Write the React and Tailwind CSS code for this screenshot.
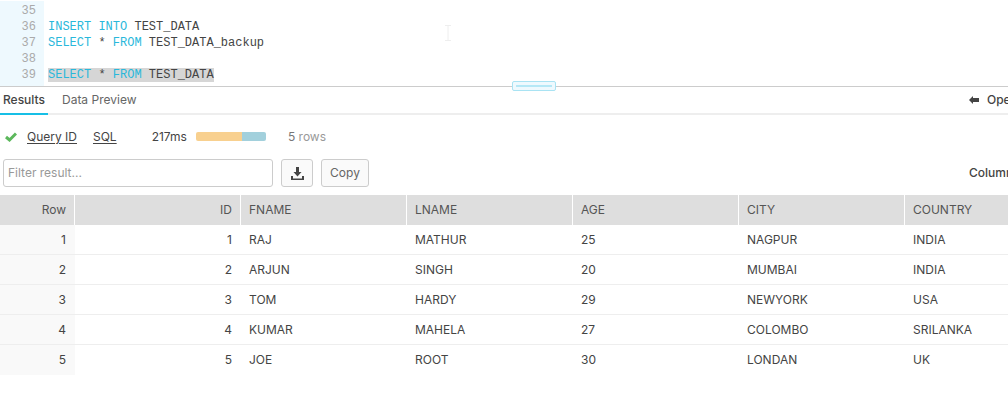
const rows = [
  [1, 1, "RAJ", "MATHUR", 25, "NAGPUR", "INDIA"],
  [2, 2, "ARJUN", "SINGH", 20, "MUMBAI", "INDIA"],
  [3, 3, "TOM", "HARDY", 29, "NEWYORK", "USA"],
  [4, 4, "KUMAR", "MAHELA", 27, "COLOMBO", "SRILANKA"],
  [5, 5, "JOE", "ROOT", 30, "LONDAN", "UK"],
];

const headers = ["FNAME", "LNAME", "AGE", "CITY", "COUNTRY"];

function CodeLine({ num, children }) {
  return (
    <div className="flex h-4 leading-4">
      <div className="w-[44px] shrink-0 bg-[#eef9fe] pr-[8px] text-right text-[#aaaaaa]">{num}</div>
      <div className="pl-[4px] whitespace-pre text-[#444444]">{children}</div>
    </div>
  );
}

function Kw({ children }) {
  return <span className="text-[#29b8db]">{children}</span>;
}

function TableGrid({ children }) {
  return <div className="grid grid-cols-[75px_166px_166px_166px_166px_166px_166px] w-[1008px] overflow-hidden">{children}</div>;
}

export default function App() {
  return (
    <div className="relative h-[409px] w-[1008px] overflow-hidden bg-white font-['Inter',sans-serif] text-[12px] text-[#444444]">
      <div className="relative flex h-[86px] flex-col pt-[1px] font-['Liberation_Mono',monospace] text-[12px]">
        <div className="h-[2px] w-[44px] bg-[#eef9fe]"></div>
        <CodeLine num="35"></CodeLine>
        <CodeLine num="36"><Kw>INSERT</Kw> <Kw>INTO</Kw> TEST_DATA</CodeLine>
        <CodeLine num="37"><Kw>SELECT</Kw> * <Kw>FROM</Kw> TEST_DATA_backup</CodeLine>
        <CodeLine num="38"></CodeLine>
        <CodeLine num="39"><span className="bg-[#d6d6d6]"><Kw>SELECT</Kw> * <Kw>FROM</Kw> TEST_DATA</span></CodeLine>
        <div className="flex-1 w-[44px] bg-[#eef9fe]"></div>
        <svg className="absolute left-[444px] top-[25px]" width="8" height="16" viewBox="0 0 8 16" fill="none" stroke="#eeeeee">
          <path d="M1 .5h6M4 .5v15M1 15.5h6" />
        </svg>
      </div>

      <div className="relative flex h-[29px] border-t border-[#cccccc] border-b-2 border-b-[#eeeeee]">
        <div className="absolute left-[512px] top-[-6px] flex h-[10px] w-[44px] items-center justify-center rounded-[2px] border border-[#a9e3f3] bg-[#eef9fe]">
          <div className="h-[2px] w-[36px] bg-[#b5e8f6]"></div>
        </div>
        <div className="flex h-[28px] items-center border-b-2 border-[#16bfe6] px-[3px] font-medium text-[#444444]">Results</div>
        <div className="ml-[14px] flex h-[26px] items-center text-[#666666]">Data Preview</div>
        <div className="ml-auto flex h-[26px] items-center gap-[8px] font-medium text-[#444444] w-[39px] whitespace-nowrap">
          <svg width="10" height="8" viewBox="0 0 10 8" className="shrink-0" fill="#444444"><path d="M0 4 4 0v2h6v4H4v2z" /></svg>
          Open
        </div>
      </div>

      <div className="flex h-[44px] items-center pb-[1px] pl-[5px]">
        <svg width="12" height="10" viewBox="0 0 12 10" fill="none" stroke="#5cb85c" strokeWidth="3"><path d="M1 5l3.500 3L11 1.500" /></svg>
        <span className="ml-[10px] underline underline-offset-2">Query ID</span>
        <span className="ml-[16px] underline underline-offset-2">SQL</span>
        <span className="ml-[35px]">217ms</span>
        <div className="ml-[9px] flex h-[9px] w-[70px] overflow-hidden rounded-[2px]">
          <div className="w-[46px] bg-[#f8d08f]"></div>
          <div className="flex-1 bg-[#a2d0dc]"></div>
        </div>
        <span className="ml-[22px] text-[#999999]"><span className="text-[#777777]">5</span> rows</span>
      </div>

      <div className="flex h-[28px] items-stretch pl-[3px]">
        <input readOnly placeholder="Filter result..." className="w-[270px] rounded-[3px] border border-[#cccccc] bg-white px-[4px] text-[12px] outline-none placeholder:text-[#999999]" />
        <button className="ml-[8px] flex w-[32px] items-center justify-center rounded-[3px] border border-[#cccccc] bg-[#fafafa]">
          <svg width="13" height="13" viewBox="0 0 13 13" fill="#444444"><path d="M5 0h3v5h2.500L6.500 9.500 2.500 5H5zM0 9h2v2.500h9V9h2v4H0z" /></svg>
        </button>
        <button className="ml-[8px] w-[48px] rounded-[3px] border border-[#cccccc] bg-[#fafafa] text-[#666666]">Copy</button>
        <div className="ml-auto flex w-[39px] items-center whitespace-nowrap font-medium text-[#444444]">Columns</div>
      </div>

      <div className="mt-[8px]">
        <TableGrid>
          <div className="mr-[1px] flex h-[30px] items-center justify-end bg-[#dedede] pr-[8px] text-[#555555]">Row</div>
          <div className="mr-[1px] flex h-[30px] items-center justify-end bg-[#dedede] pr-[8px] text-[#555555]">ID</div>
          {headers.map((h) => (
            <div key={h} className="mr-[1px] flex h-[30px] items-center bg-[#dedede] pl-[8px] text-[#555555]">{h}</div>
          ))}
          {rows.map((r) => (
            <div key={r[0]} className="contents">
              <div className={r[0] === 5 ? "flex h-[30px] items-center justify-end bg-[#f9f9f9] pr-[9px] text-[#444444]" : "flex h-[30px] items-center justify-end border-b border-[#eeeeee] bg-[#f9f9f9] pr-[9px] text-[#444444]"}>{r[0]}</div>
              <div className={r[0] === 5 ? "flex h-[30px] items-center justify-end pr-[9px] text-[#444444]" : "flex h-[30px] items-center justify-end border-b border-[#eeeeee] pr-[9px] text-[#444444]"}>{r[1]}</div>
              {r.slice(2).map((v, i) => (
                <div key={i} className={r[0] === 5 ? "flex h-[30px] items-center pl-[8px] text-[#444444]" : "flex h-[30px] items-center border-b border-[#eeeeee] pl-[8px] text-[#444444]"}>{v}</div>
              ))}
            </div>
          ))}
        </TableGrid>
      </div>
    </div>
  );
}
